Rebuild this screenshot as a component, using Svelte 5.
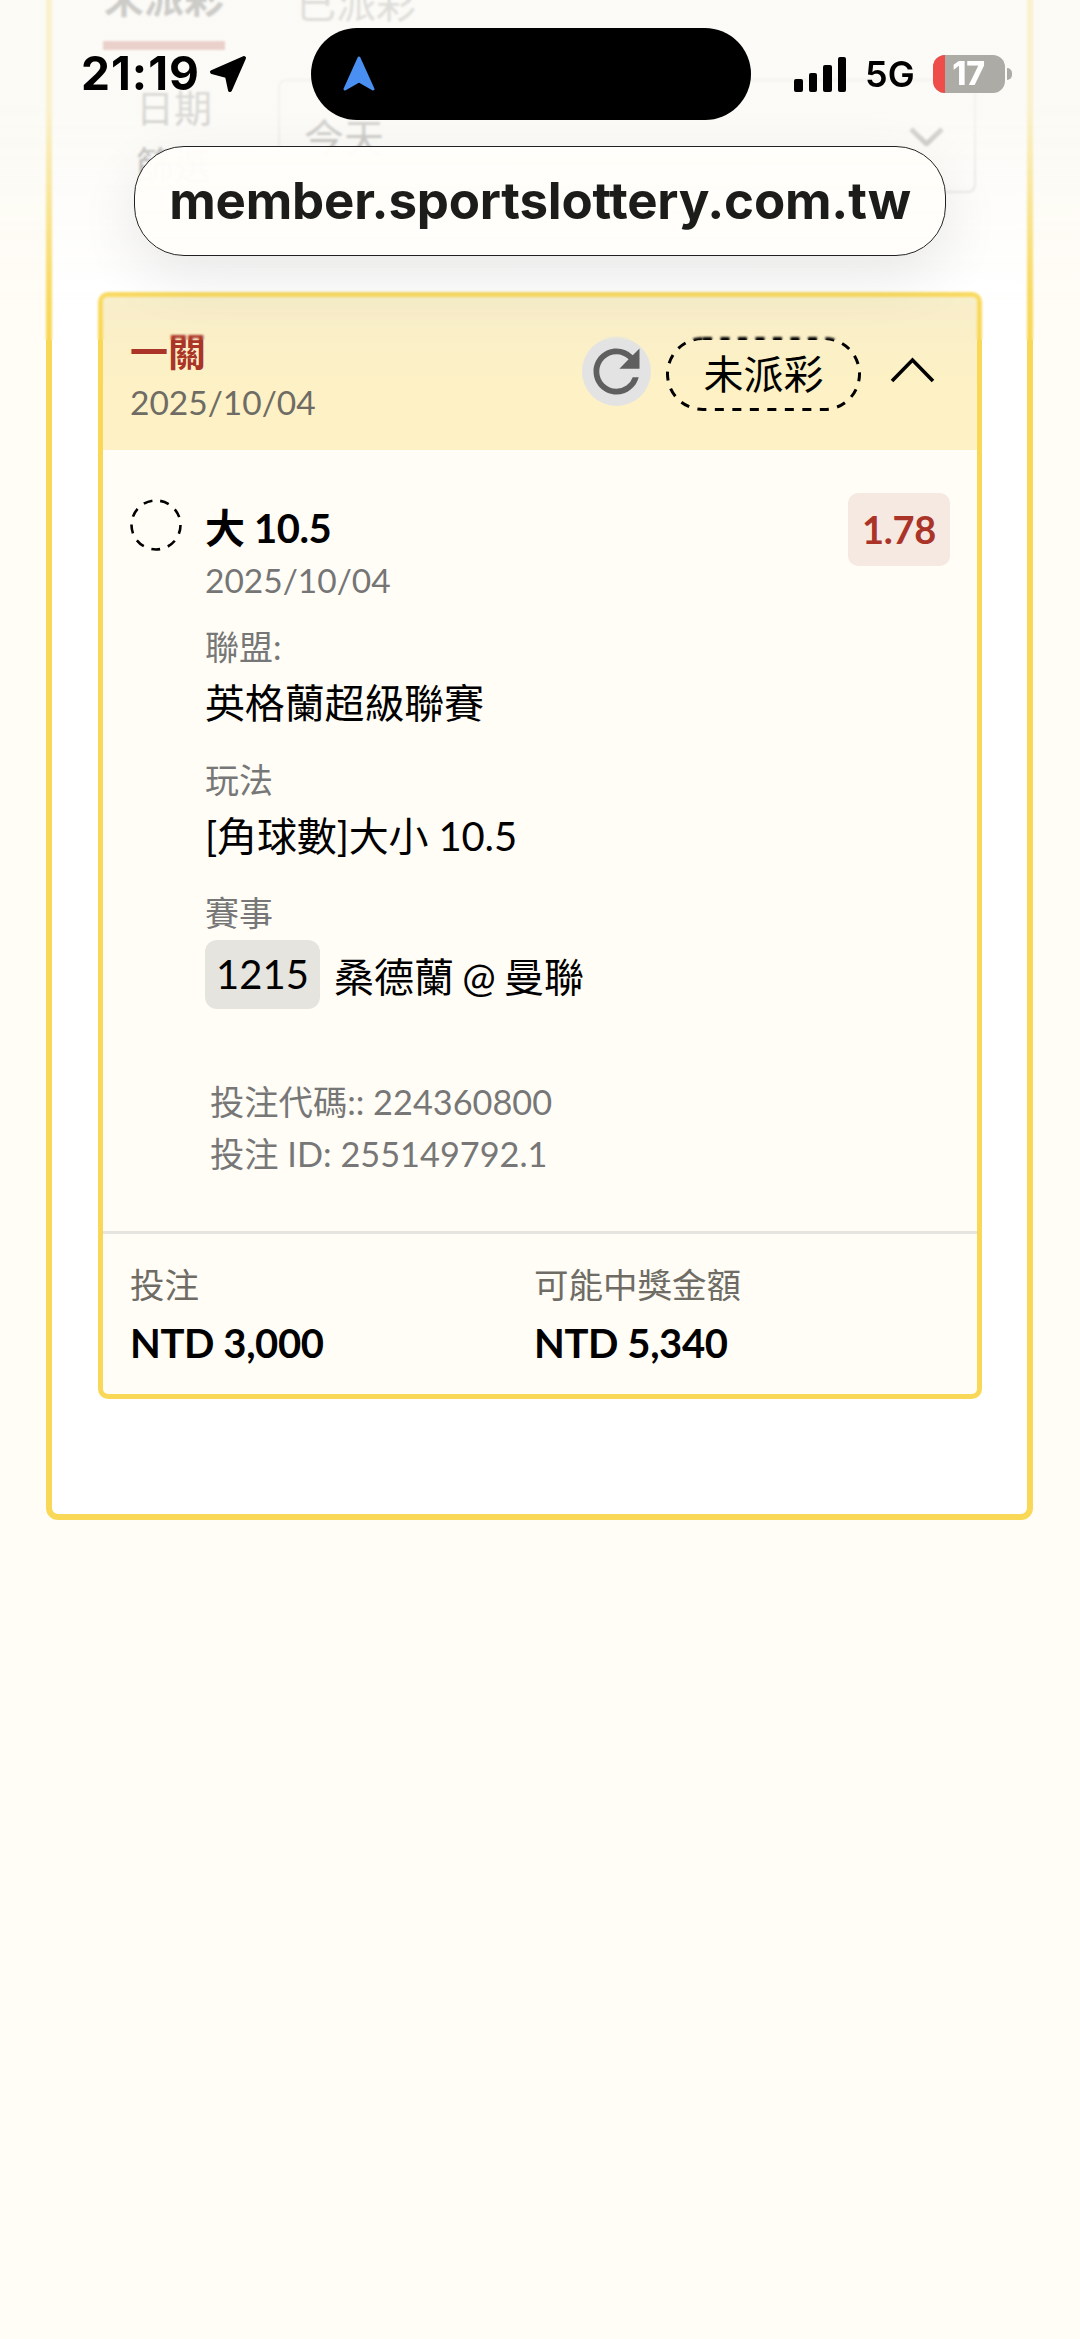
<script>
	const bars = [13, 19, 27, 35];
	const fields = [
		{ label: '聯盟:', value: '英格蘭超級聯賽' },
		{ label: '玩法', value: '[角球數]大小 10.5' }
	];
</script>

<div class="page">
	<section class="panel">
		<div class="tabs">
			<span class="tab active">未派彩</span>
			<span class="tab">已派彩</span>
		</div>

		<div class="filters">
			<div class="labels">
				<span>日期</span>
				<span>篩選</span>
			</div>
			<div class="select">
				<span>今天</span>
				<svg width="35" height="19" viewBox="0 0 35 19" fill="none">
					<path d="M2 2l15.5 15L33 2" stroke="#8a8a8a" stroke-width="5" />
				</svg>
			</div>
		</div>

		<article class="ticket">
			<header class="ticket-head">
				<div class="head-left">
					<div class="title">一關</div>
					<div class="date">2025/10/04</div>
				</div>
				<div class="head-right">
					<div class="refresh">
						<svg width="69" height="69" viewBox="0 0 24 24" fill="#5f5f5f">
							<path d="M17.65 6.35A7.958 7.958 0 0 0 12 4c-4.42 0-7.99 3.58-7.99 8s3.57 8 7.99 8c3.73 0 6.84-2.55 7.73-6h-2.08A5.99 5.99 0 0 1 12 18c-3.31 0-6-2.69-6-6s2.69-6 6-6c1.66 0 3.14.69 4.22 1.78L13 11h7V4l-2.35 2.35z" />
						</svg>
					</div>
					<div class="status">
						<svg class="status-border" width="195" height="74" viewBox="0 0 195 74" fill="none">
							<rect x="1.500" y="1.500" width="192" height="71" rx="35.500" stroke="#000" stroke-width="3" stroke-dasharray="9 8.500" />
						</svg>
						未派彩
					</div>
					<svg class="chevron" width="45" height="26" viewBox="0 0 45 26" fill="none">
						<path d="M2 24L22.5 3 43 24" stroke="#000" stroke-width="3.6" />
					</svg>
				</div>
			</header>

			<div class="ticket-body">
				<div class="bet-row">
					<svg class="dash-circle" width="52" height="52" viewBox="0 0 52 52" fill="none">
						<circle cx="26" cy="26" r="24.500" stroke="#000" stroke-width="2.600" stroke-dasharray="9 8" />
					</svg>
					<div class="bet-main">
						<div class="bet-name">大 10.5</div>
						<div class="bet-date">2025/10/04</div>
					</div>
					<div class="odds">1.78</div>
				</div>

				<div class="details">
					{#each fields as f}
						<div class="field-label">{f.label}</div>
						<div class="field-value">{f.value}</div>
					{/each}
					<div class="field-label">賽事</div>
					<div class="match">
						<span class="match-no">1215</span>
						<span class="match-name">桑德蘭 @ 曼聯</span>
					</div>
				</div>

				<div class="codes">
					<div>投注代碼:: 224360800</div>
					<div>投注 ID: 255149792.1</div>
				</div>
			</div>

			<footer class="ticket-foot">
				<div>
					<div class="foot-label">投注</div>
					<div class="foot-value">NTD 3,000</div>
				</div>
				<div>
					<div class="foot-label">可能中獎金額</div>
					<div class="foot-value">NTD 5,340</div>
				</div>
			</footer>
		</article>
	</section>

	<!-- browser chrome lies over the page -->
	<div class="chrome">
		<div class="statusbar">
			<div class="sb-left">
				<span class="time">21:19</span>
				<svg width="38" height="38" viewBox="0 0 38 38">
					<path d="M35 3L3 17 18 21 21 35z" fill="#000" stroke="#000" stroke-width="4" stroke-linejoin="round" />
				</svg>
			</div>
			<div class="island">
				<svg width="34" height="36" viewBox="0 0 34 36">
					<path d="M17 2L31 33 17 25 3 33z" fill="#4a90f2" stroke="#4a90f2" stroke-width="3" stroke-linejoin="round" />
				</svg>
			</div>
			<div class="sb-right">
				<div class="signal">
					{#each bars as h}
						<i style="height: {h}px"></i>
					{/each}
				</div>
				<span class="net">5G</span>
				<div class="battery"><b></b><span>17</span></div>
				<i class="nub"></i>
			</div>
		</div>
		<div class="url">member.sportslottery.com.tw</div>
	</div>
</div>

<style>
	:global(body) {
		background: #fffdf6;
		font-family: Lato, 'Noto Sans CJK TC', sans-serif;
	}
	.page {
		position: relative;
		height: 2339px;
		overflow: hidden;
		background: #fffdf6;
	}
	.panel {
		margin: -60px 47px 0 46px;
		padding-top: 27px;
		padding-bottom: 115px;
		border: 6px solid #f9d857;
		border-radius: 12px;
		background: #fff;
	}
	.tabs {
		display: flex;
		align-items: flex-start;
		gap: 71px;
		padding-left: 51px;
		font-size: 40px;
		line-height: 50px;
		color: #888;
	}
	.tab {
		padding-top: 5px;
	}
	.tab.active {
		padding: 0 1px 18px;
		border-bottom: 9px solid #bc5850;
		font-weight: 700;
		color: #444;
	}
	.filters {
		display: flex;
		margin-top: 29px;
		padding: 0 51px 0 84px;
		gap: 66px;
		height: 114px;
	}
	.labels {
		display: flex;
		flex-direction: column;
		font-size: 38px;
		line-height: 57px;
		color: #777;
	}
	.select {
		flex: 1;
		display: flex;
		align-items: center;
		justify-content: space-between;
		padding: 0 30px 0 24px;
		border: 2px solid #ddd;
		border-radius: 8px;
		font-size: 40px;
		color: #777;
	}
	.ticket {
		margin: 99px 45px 0 46px;
		border: 5px solid #f9d857;
		border-radius: 10px;
		background: #fffdf6;
		overflow: hidden;
	}
	.ticket-head {
		display: flex;
		justify-content: space-between;
		align-items: flex-start;
		height: 153px;
		box-sizing: border-box;
		padding: 29px 42px 0 27px;
		background: linear-gradient(#f8eec8, #fdf1c5 60%);
	}
	.title {
		font-size: 38px;
		line-height: 50px;
		font-weight: 700;
		color: #ab3428;
	}
	.date {
		margin-top: 1px;
		font-size: 33.5px;
		line-height: 50px;
		color: #6e6c64;
	}
	.head-right {
		display: flex;
		align-items: flex-start;
		margin-top: 11px;
	}
	.refresh {
		width: 69px;
		height: 69px;
		border-radius: 50%;
		background: #e3e3e3;
	}
	.refresh svg {
		display: block;
	}
	.status {
		position: relative;
		width: 195px;
		height: 74px;
		margin-left: 15px;
		font-size: 40px;
		line-height: 74px;
		text-align: center;
		color: #000;
	}
	.status-border {
		position: absolute;
		top: 0;
		left: 0;
	}
	.chevron {
		margin: 20px 0 0 29px;
	}
	.ticket-body {
		padding: 43px 27px 51px 27px;
	}
	.bet-row {
		display: flex;
		align-items: flex-start;
	}
	.dash-circle {
		flex: none;
		margin-top: 6px;
	}
	.bet-main {
		flex: 1;
		margin-left: 23px;
		padding-top: 10px;
	}
	.bet-name {
		font-size: 40px;
		line-height: 50px;
		font-weight: 700;
		letter-spacing: -0.4px;
		color: #000;
	}
	.bet-date {
		margin-top: 2px;
		font-size: 33.5px;
		line-height: 50px;
		color: #757575;
	}
	.odds {
		width: 102px;
		height: 73px;
		border-radius: 10px;
		background: #f5e9e2;
		font-size: 38px;
		font-weight: 700;
		line-height: 73px;
		text-align: center;
		letter-spacing: -0.3px;
		color: #ab3428;
	}
	.details {
		margin-left: 75px;
		margin-top: 19px;
	}
	.field-label {
		font-size: 34px;
		line-height: 46px;
		color: #777;
	}
	.field-value {
		margin: 8px 0 29px;
		font-size: 40px;
		line-height: 50px;
		letter-spacing: -0.15px;
		color: #000;
	}
	.match {
		display: flex;
		align-items: center;
		gap: 14px;
		margin-top: 4px;
		font-size: 40px;
		color: #000;
	}
	.match-name {
		word-spacing: -2px;
	}
	.match-no {
		width: 115px;
		height: 69px;
		border-radius: 12px;
		background: #e5e4df;
		line-height: 69px;
		text-align: center;
	}
	.codes {
		margin: 67px 0 0 80px;
		font-size: 34.3px;
		line-height: 52px;
		color: #777;
	}
	.ticket-foot {
		display: grid;
		grid-template-columns: 404px 1fr;
		padding: 28px 27px 26px;
		border-top: 3px solid #e5e4df;
	}
	.foot-label {
		font-size: 34.5px;
		line-height: 46px;
		color: #6e6c64;
	}
	.foot-value {
		margin-top: 10px;
		font-size: 40px;
		line-height: 50px;
		font-weight: 700;
		letter-spacing: -0.4px;
		color: #000;
	}
	.chrome {
		position: absolute;
		top: 0;
		left: 0;
		width: 1080px;
		height: 340px;
		backdrop-filter: blur(1px);
		background: linear-gradient(
			to bottom,
			rgba(250, 249, 244, 0.75) 0,
			rgba(250, 249, 244, 0.75) 110px,
			rgba(250, 249, 244, 0.42) 200px,
			rgba(250, 249, 244, 0.08) 290px,
			rgba(250, 249, 244, 0) 340px
		);
	}
	.statusbar {
		display: flex;
		align-items: center;
		height: 92px;
		margin-top: 28px;
		font-family: Inter, sans-serif;
		color: #000;
	}
	.sb-left {
		display: flex;
		align-items: center;
		gap: 9px;
		width: 311px;
		padding-left: 81px;
		box-sizing: border-box;
	}
	.time {
		margin-top: -2px;
		font-size: 46px;
		font-weight: 700;
		letter-spacing: 1px;
	}
	.island {
		display: flex;
		align-items: center;
		width: 440px;
		height: 92px;
		box-sizing: border-box;
		padding-left: 31px;
		border-radius: 46px;
		background: #000;
	}
	.sb-right {
		display: flex;
		align-items: center;
		padding-left: 43px;
	}
	.signal {
		display: flex;
		align-items: flex-end;
		gap: 6px;
		height: 35px;
	}
	.signal i {
		width: 8.5px;
		border-radius: 2px;
		background: #000;
	}
	.net {
		margin-left: 19px;
		font-size: 36px;
		font-weight: 600;
	}
	.battery {
		position: relative;
		width: 72px;
		height: 38px;
		margin-left: 18px;
		border-radius: 12px;
		background: #adaba6;
		overflow: hidden;
		text-align: center;
	}
	.battery b {
		position: absolute;
		left: 0;
		top: 0;
		bottom: 0;
		width: 12px;
		background: #ee4d4a;
	}
	.battery span {
		position: relative;
		font-size: 32px;
		font-weight: 800;
		line-height: 38px;
		color: #fff;
	}
	.nub {
		width: 5px;
		height: 12px;
		margin-left: 2px;
		border-radius: 0 6px 6px 0;
		background: #adaba6;
	}
	.url {
		box-sizing: border-box;
		width: 812px;
		height: 110px;
		margin: 26px 0 0 134px;
		border: 1.5px solid #222;
		border-radius: 50px;
		background: rgba(255, 254, 250, 0.96);
		box-shadow: 0 20px 60px rgba(0, 0, 0, 0.09);
		font-family: Inter, sans-serif;
		font-size: 51px;
		font-weight: 700;
		letter-spacing: -0.2px;
		line-height: 107px;
		text-align: center;
		white-space: nowrap;
		color: #1c1c1a;
	}
</style>
